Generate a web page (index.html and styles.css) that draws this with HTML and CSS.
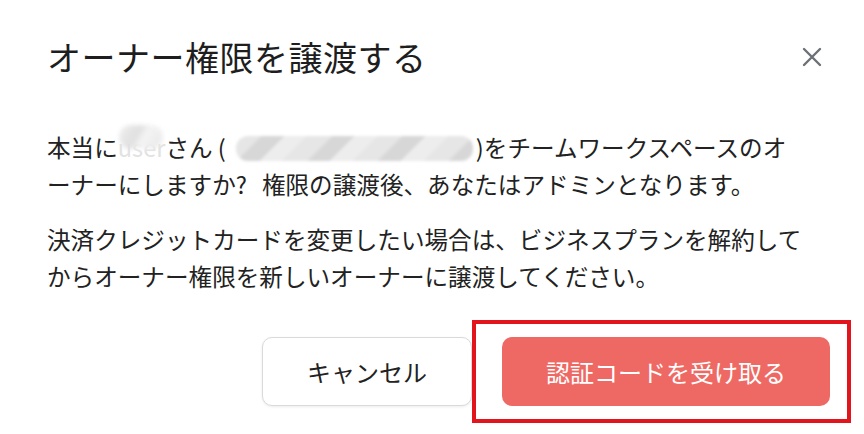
FILE: index.html
```html
<!DOCTYPE html>
<html lang="ja">
<head>
<meta charset="utf-8">
<link rel="stylesheet" href="styles.css">
</head>
<body>
<div class="dialog">
  <div class="header">
    <h1 class="title">オーナー権限を譲渡する</h1>
    <button class="close" aria-label="閉じる">
      <svg width="20" height="20" viewBox="0 0 20 20"><path d="M2 2 L18 18 M18 2 L2 18" stroke="#6c7176" stroke-width="2.4" stroke-linecap="round" fill="none"/></svg>
    </button>
  </div>
  <div class="content">
    <p class="para">本当に<span class="redact-user">user</span>さん (<span class="redact-mail"></span>)をチームワークスペースのオ<br>ーナーにしますか?<span class="wide-space"> </span>権限の譲渡後、あなたはアドミンとなります。</p>
    <p class="para">決済クレジットカードを変更したい場合は、ビジネスプランを解約して<br>からオーナー権限を新しいオーナーに譲渡してください。</p>
  </div>
  <div class="footer">
    <button class="btn btn-cancel">キャンセル</button>
    <button class="btn btn-primary">認証コードを受け取る</button>
  </div>
  <div class="highlight"></div>
</div>
</body>
</html>
```
FILE: styles.css
```css
* { box-sizing: border-box; }
html, body { margin: 0; padding: 0; background: #ffffff; }
body {
  font-family: "Noto Sans CJK JP", "Noto Sans", sans-serif;
  color: #222222;
}
.dialog {
  position: relative;
  width: 864px;
  height: 434px;
  padding: 36px 34px 0 47px;
  background: #ffffff;
}
.header {
  display: flex;
  align-items: center;
  justify-content: space-between;
  height: 42px;
}
.title {
  margin: 0;
  font-size: 34px;
  font-weight: 400;
  line-height: 42px;
  letter-spacing: 0.5px;
  color: #1e1e1e;
}
.close {
  display: flex;
  align-items: center;
  justify-content: center;
  width: 20px;
  height: 20px;
  margin-right: 8px;
  padding: 0;
  border: none;
  background: transparent;
}
.content {
  margin-top: 51px;
}
.para {
  margin: 0 0 18px 0;
  font-size: 23.6px;
  line-height: 37px;
  color: #222222;
  white-space: nowrap;
}
.para:last-child {
  margin-bottom: 0;
}
.wide-space {
  display: inline-block;
  width: 15px;
}
.redact-user {
  position: relative;
  color: #e2e2e2;
}
.redact-user::after {
  content: "";
  position: absolute;
  left: 1px;
  right: 2px;
  top: -5px;
  height: 24px;
  border-radius: 12px;
  background: linear-gradient(120deg, #eeeeee 0%, #dddddd 40%, #f3f3f3 55%, #e6e6e6 100%);
  filter: blur(2px);
  opacity: 0.9;
}
.redact-mail {
  display: inline-block;
  width: 237px;
  height: 25px;
  margin: 0 3px 0 10px;
  vertical-align: -4px;
  border-radius: 12px;
  background: repeating-linear-gradient(135deg, #e6e6e6 0px, #e6e6e6 18px, #d7d7d7 18px, #d7d7d7 34px, #ededed 34px, #ededed 50px);
  filter: blur(1.5px);
}
.footer {
  display: flex;
  justify-content: flex-end;
  gap: 30px;
  margin-top: 42px;
}
.btn {
  height: 69px;
  padding: 0 44px;
  font-family: "Noto Sans CJK JP", "Noto Sans", sans-serif;
  font-size: 24px;
  border-radius: 10px;
  cursor: pointer;
}
.btn-cancel {
  background: #ffffff;
  color: #222222;
  border: 1px solid #dadada;
  box-shadow: 0 1px 3px rgba(0, 0, 0, 0.08);
}
.btn-primary {
  background: #ef6964;
  color: #ffffff;
  border: none;
}
.highlight {
  position: absolute;
  left: 472px;
  top: 320px;
  width: 379px;
  height: 103px;
  border: 4px solid #e3151c;
  pointer-events: none;
}
```
